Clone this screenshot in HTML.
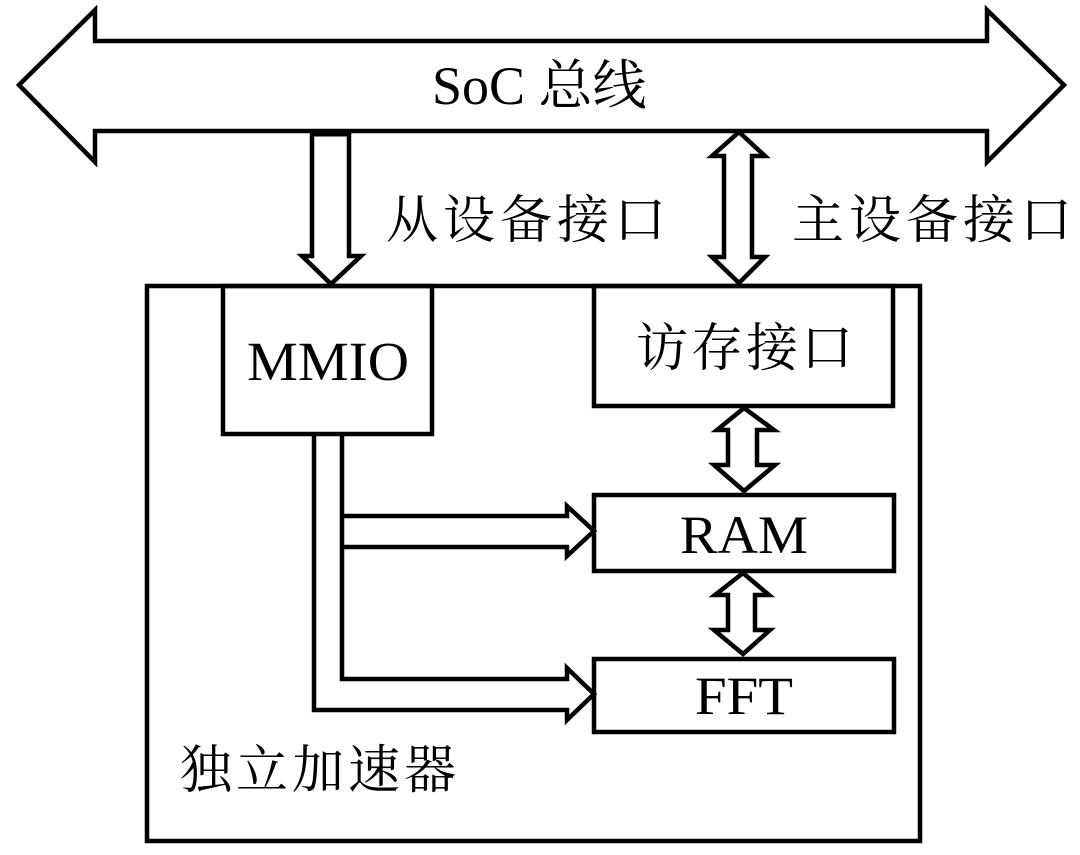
<!DOCTYPE html>
<html><head><meta charset="utf-8"><style>
html,body{margin:0;padding:0;background:#fff;}
svg{display:block;}
text{font-family:"Liberation Serif","Noto Serif CJK SC",serif;fill:#000;}
</style></head><body>
<svg width="1080" height="855" viewBox="0 0 1080 855" xmlns="http://www.w3.org/2000/svg">
<g fill="none" stroke="#000" stroke-width="4.5" stroke-linejoin="miter">
<path d="M19,85 L95,10 L95,41 L987,41 L987,10 L1064,85 L987,162 L987,131 L95,131 L95,162 Z"/>
<path d="M312,133 L312,256 L302,256 L331,284 L361,256 L349,256 L349,133"/>
<path d="M312,133 L349,133" stroke-width="7"/>
<path d="M739,132 L765,156 L752,156 L752,257 L765,257 L739,283 L712,257 L724,257 L724,156 L712,156 Z"/>
<rect x="147" y="286" width="773" height="555"/>
<rect x="223" y="286" width="209" height="148"/>
<rect x="594" y="286" width="299" height="120"/>
<rect x="594" y="495" width="300" height="76"/>
<rect x="594" y="659" width="300" height="73"/>
<path d="M744,408 L774,430 L757,430 L757,465 L775,465 L744,491 L714,465 L728,465 L728,430 L717,430 Z"/>
<path d="M743,573 L769,595 L755,595 L755,630 L770,630 L743,654 L714,630 L728,630 L728,595 L715,595 Z"/>
<path d="M342,434 L342,679 L567,679 L567,668 L594,694 L567,720 L567,710 L314,710 L314,434"/>
<path d="M342,516 L567,516 L567,506 L594,531 L567,556 L567,547 L342,547"/>
</g>
<text x="432" y="104" font-size="54">SoC 总线</text>
<text x="386" y="238" font-size="52" letter-spacing="5">从设备接口</text>
<text x="792" y="238" font-size="52" letter-spacing="5">主设备接口</text>
<text x="247" y="380" font-size="55" textLength="162" lengthAdjust="spacingAndGlyphs">MMIO</text>
<text x="636" y="366" font-size="52" letter-spacing="3">访存接口</text>
<text x="680" y="553" font-size="54" textLength="128" lengthAdjust="spacingAndGlyphs">RAM</text>
<text x="695" y="714" font-size="54" textLength="98" lengthAdjust="spacingAndGlyphs">FFT</text>
<text x="180" y="788" font-size="52" letter-spacing="4">独立加速器</text>
</svg>
</body></html>
